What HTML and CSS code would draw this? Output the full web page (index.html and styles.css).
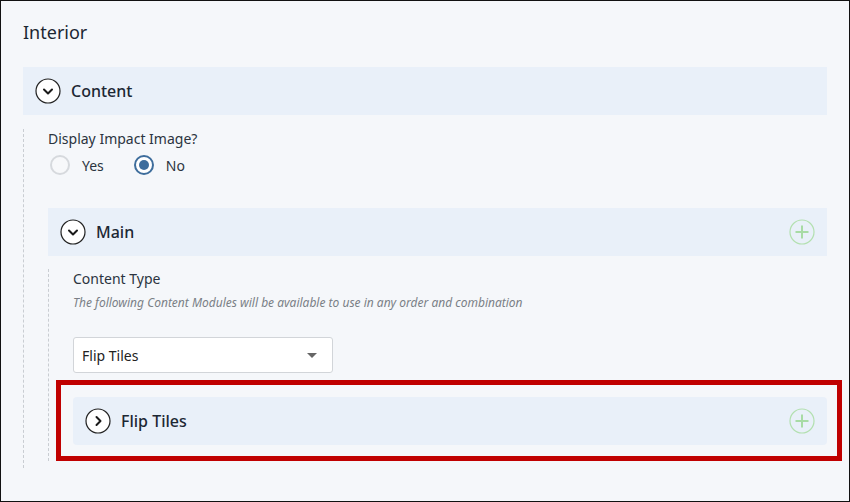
FILE: index.html
```html
<!DOCTYPE html>
<html lang="en">
<head>
    <meta charset="UTF-8">
    <meta name="viewport" content="width=device-width, initial-scale=1.0">
    <title>Interior</title>
    <link rel="stylesheet" href="styles.css">
</head>
<body>
    <div class="frame">
        <h2 class="title">Interior</h2>

        <div class="panel">
            <div class="panel-head">
                <span class="toggle">
                    <svg viewBox="0 0 26 26" width="26" height="26"><circle cx="13" cy="13" r="12" fill="#fff" stroke="#222" stroke-width="1.2"/><path d="M9 11.5 L13 15.5 L17 11.5" fill="none" stroke="#1a1a1a" stroke-width="2" stroke-linecap="round" stroke-linejoin="round"/></svg>
                </span>
                <span class="panel-name">Content</span>
            </div>
            <div class="panel-body outer">
                <div class="field">
                    <label class="field-label">Display Impact Image?</label>
                    <div class="radios">
                        <span class="radio"><span class="dot"></span>Yes</span>
                        <span class="radio checked"><span class="dot"></span>No</span>
                    </div>
                </div>

                <div class="panel">
                    <div class="panel-head">
                        <span class="toggle">
                            <svg viewBox="0 0 26 26" width="26" height="26"><circle cx="13" cy="13" r="12" fill="#fff" stroke="#222" stroke-width="1.2"/><path d="M9 11.5 L13 15.5 L17 11.5" fill="none" stroke="#1a1a1a" stroke-width="2" stroke-linecap="round" stroke-linejoin="round"/></svg>
                        </span>
                        <span class="panel-name">Main</span>
                        <span class="add">
                            <svg viewBox="0 0 26 26" width="26" height="26"><circle cx="13" cy="13" r="12" fill="none" stroke="#b3e0b0" stroke-width="1.2"/><path d="M13 6.5 V19.5 M6.5 13 H19.5" stroke="#a8dba5" stroke-width="2"/></svg>
                        </span>
                    </div>
                    <div class="panel-body inner">
                        <label class="field-label">Content Type</label>
                        <p class="help">The following Content Modules will be available to use in any order and combination</p>
                        <div class="select">
                            <span>Flip Tiles</span>
                            <span class="caret"></span>
                        </div>

                        <div class="panel flip">
                            <div class="panel-head rounded">
                                <span class="toggle">
                                    <svg viewBox="0 0 26 26" width="26" height="26"><circle cx="13" cy="13" r="12" fill="#fff" stroke="#222" stroke-width="1.2"/><path d="M11.5 9 L15.5 13 L11.5 17" fill="none" stroke="#1a1a1a" stroke-width="2" stroke-linecap="round" stroke-linejoin="round"/></svg>
                                </span>
                                <span class="panel-name">Flip Tiles</span>
                                <span class="add">
                                    <svg viewBox="0 0 26 26" width="26" height="26"><circle cx="13" cy="13" r="12" fill="none" stroke="#b3e0b0" stroke-width="1.2"/><path d="M13 6.5 V19.5 M6.5 13 H19.5" stroke="#a8dba5" stroke-width="2"/></svg>
                                </span>
                            </div>
                            <div class="highlight"></div>
                        </div>
                    </div>
                </div>
            </div>
        </div>
    </div>
</body>
</html>
```

FILE: styles.css
```css
* { margin: 0; padding: 0; box-sizing: border-box; }
body { font-family: "Noto Sans", "Open Sans", sans-serif; color: #1f2a36; background: #fff; }
.frame { width: 850px; height: 502px; border: 1px solid #111; background: #f5f7fa; padding: 19px 22px 0 22px; overflow: hidden; }
.title { font-size: 18px; font-weight: 400; line-height: 24px; color: #1c2733; margin-bottom: 23px; }

.panel { display: flex; flex-direction: column; }
.panel-head { display: flex; align-items: center; height: 48px; background: #e9f0f9; padding: 0 12px; }
.panel-head.rounded { border-radius: 4px; }
.toggle { width: 26px; height: 26px; display: flex; margin-right: 10px; }
.panel-name { font-size: 16px; font-weight: 500; color: #1c2733; flex: 1; }
.add { width: 26px; height: 26px; display: flex; }

.panel-body { border-left: 1px dashed #c9cdd2; padding: 0 0 0 24px; }
.panel-body.outer { margin-top: 14px; padding-bottom: 7px; }
.field-label { display: block; font-size: 14px; line-height: 20px; color: #2b3440; }
.field { margin-bottom: 31px; }
.radios { display: flex; gap: 28px; margin-top: 4px; height: 24px; align-items: center; }
.radio { display: flex; align-items: center; font-size: 14px; color: #2b3440; }
.radio .dot { width: 20px; height: 20px; border-radius: 50%; border: 2px solid #d6d9dd; background: #f7f8fa; margin: 0 12px 0 2px; }
.radio.checked .dot { border-color: #3e6d9c; background: #fff; position: relative; }
.radio.checked .dot::after { content: ""; position: absolute; left: 3px; top: 3px; width: 10px; height: 10px; border-radius: 50%; background: #3e6d9c; }

.panel-body.inner { margin-top: 13px; }
.help { font-size: 12px; font-style: italic; color: #7a7f86; margin-top: 6px; line-height: 16px; }
.select { width: 260px; height: 36px; margin-top: 26px; background: #fff; border: 1px solid #d2d5d9; border-radius: 3px;
          display: flex; align-items: center; justify-content: space-between; padding: 0 15px 0 8px; font-size: 14px; color: #222; }
.caret { width: 0; height: 0; border-left: 5px solid transparent; border-right: 5px solid transparent; border-top: 5px solid #666; }

.flip { margin-top: 24px; position: relative; padding-bottom: 16px; }
.highlight { position: absolute; left: -17px; right: -15px; top: -17px; bottom: 0; border: 5px solid #c00000; pointer-events: none; }
```
